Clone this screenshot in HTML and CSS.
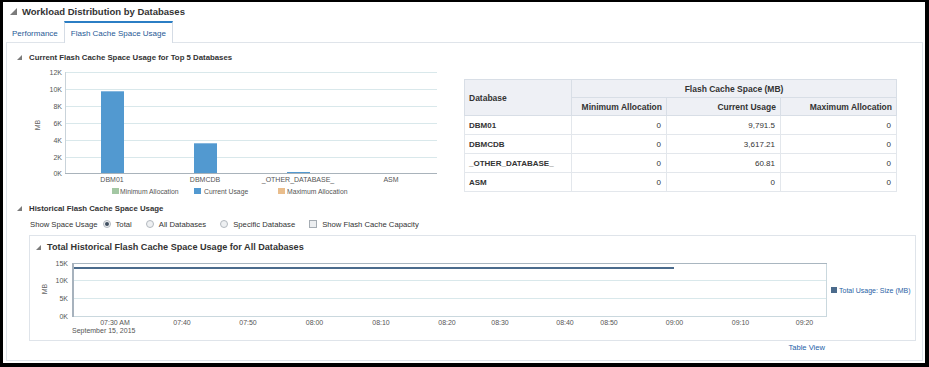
FILE: index.html
```html
<!DOCTYPE html>
<html>
<head>
    <title>Workload Distribution by Databases</title>
    <link rel="stylesheet" href="styles.css">
</head>
<body>
    <div class="page">
        <div class="title-row">
            <svg class="disc disc-big" viewBox="0 0 7 7"><polygon points="7,0 7,7 0,7"/></svg>
            <h1>Workload Distribution by Databases</h1>
        </div>

        <div class="tabs">
            <div class="tab">Performance</div>
            <div class="tab active">Flash Cache Space Usage</div>
        </div>

        <div class="panel">
            <div class="sec-head">
                <svg class="disc" viewBox="0 0 6 6"><polygon points="6,0 6,6 0,6"/></svg>
                Current Flash Cache Space Usage for Top 5 Databases
            </div>

            <div class="top-row">
                <svg class="chart bar-chart" width="440" height="135">
                    <g class="grid">
                        <line x1="58" y1="9.5" x2="430" y2="9.5"/>
                        <line x1="58" y1="26.5" x2="430" y2="26.5"/>
                        <line x1="58" y1="43.5" x2="430" y2="43.5"/>
                        <line x1="58" y1="60.5" x2="430" y2="60.5"/>
                        <line x1="58" y1="77.5" x2="430" y2="77.5"/>
                        <line x1="58" y1="94.5" x2="430" y2="94.5"/>
                    </g>
                    <line class="axis-y" x1="58.5" y1="9" x2="58.5" y2="110"/>
                    <line class="axis-x" x1="58" y1="110.5" x2="430" y2="110.5"/>

                    <g class="ylab">
                        <text x="55" y="12">12K</text>
                        <text x="55" y="29">10K</text>
                        <text x="55" y="46">8K</text>
                        <text x="55" y="63">6K</text>
                        <text x="55" y="80">4K</text>
                        <text x="55" y="97">2K</text>
                        <text x="55" y="113">0K</text>
                    </g>
                    <text class="unit" x="30" y="64.5" transform="rotate(-90 30 62)">MB</text>

                    <rect class="bar" x="94" y="28" width="23" height="82"/>
                    <rect class="bar-top" x="94" y="28" width="23" height="1"/>
                    <rect class="bar" x="187" y="80" width="23" height="30"/>
                    <rect class="bar-top" x="187" y="80" width="23" height="1"/>
                    <rect class="bar" x="280" y="109" width="23" height="1"/>

                    <g class="xlab">
                        <text x="105" y="119">DBM01</text>
                        <text x="198" y="119">DBMCDB</text>
                        <text x="291" y="119">_OTHER_DATABASE_</text>
                        <text x="384" y="119">ASM</text>
                    </g>

                    <rect x="105" y="125" width="7" height="6" fill="#a3c7a3"/>
                    <text class="leg" x="113" y="131">Minimum Allocation</text>
                    <rect x="187" y="125" width="7" height="6" fill="#5299d0"/>
                    <text class="leg" x="197" y="131">Current Usage</text>
                    <rect x="271" y="125" width="7" height="6" fill="#e9bd8c"/>
                    <text class="leg" x="280" y="131">Maximum Allocation</text>
                </svg>

                <table class="usage">
                    <colgroup>
                        <col style="width: 107px">
                        <col style="width: 95px">
                        <col style="width: 114px">
                        <col style="width: 116px">
                    </colgroup>
                    <tr class="hrow">
                        <th rowspan="2" class="name-head">Database</th>
                        <th colspan="3" class="group-head">Flash Cache Space (MB)</th>
                    </tr>
                    <tr class="hrow">
                        <th>Minimum Allocation</th>
                        <th>Current Usage</th>
                        <th>Maximum Allocation</th>
                    </tr>
                    <tr>
                        <td class="name">DBM01</td>
                        <td>0</td>
                        <td>9,791.5</td>
                        <td>0</td>
                    </tr>
                    <tr>
                        <td class="name">DBMCDB</td>
                        <td>0</td>
                        <td>3,617.21</td>
                        <td>0</td>
                    </tr>
                    <tr>
                        <td class="name">_OTHER_DATABASE_</td>
                        <td>0</td>
                        <td>60.81</td>
                        <td>0</td>
                    </tr>
                    <tr>
                        <td class="name">ASM</td>
                        <td>0</td>
                        <td>0</td>
                        <td>0</td>
                    </tr>
                </table>
            </div>

            <div class="sec-head sec-2">
                <svg class="disc" viewBox="0 0 6 6"><polygon points="6,0 6,6 0,6"/></svg>
                Historical Flash Cache Space Usage
            </div>

            <div class="controls">
                <span>Show Space Usage</span>
                <span class="opt first"><span class="radio on"></span>Total</span>
                <span class="opt"><span class="radio"></span>All Databases</span>
                <span class="opt"><span class="radio"></span>Specific Database</span>
                <span class="opt"><span class="check"></span>Show Flash Cache Capacity</span>
            </div>

            <div class="inner">
                <div class="inner-head">
                    <svg class="disc" viewBox="0 0 6 6"><polygon points="6,0 6,6 0,6"/></svg>
                    Total Historical Flash Cache Space Usage for All Databases
                </div>
                <svg class="chart line-chart" width="885" height="86">
                    <rect class="plot" x="42.5" y="9.5" width="754" height="53"/>
                    <line class="plot-top" x1="42" y1="9.5" x2="797" y2="9.5"/>
                    <g class="grid">
                        <line x1="44" y1="26.5" x2="796" y2="26.5"/>
                        <line x1="44" y1="44.5" x2="796" y2="44.5"/>
                    </g>
                    <line class="axis-left" x1="43" y1="9" x2="43" y2="63"/>
                    <line class="usage-line" x1="44" y1="14" x2="644" y2="14"/>

                    <g class="ylab">
                        <text x="38" y="12">15K</text>
                        <text x="38" y="29">10K</text>
                        <text x="38" y="47">5K</text>
                        <text x="38" y="65">0K</text>
                    </g>
                    <text class="unit" x="14" y="37.5" transform="rotate(-90 14 35)">MB</text>

                    <g class="xlab">
                        <text x="85" y="71">07:30 AM</text>
                        <text x="152" y="71">07:40</text>
                        <text x="218" y="71">07:50</text>
                        <text x="284.5" y="71">08:00</text>
                        <text x="351" y="71">08:10</text>
                        <text x="417" y="71">08:20</text>
                        <text x="470" y="71">08:30</text>
                        <text x="535" y="71">08:40</text>
                        <text x="579" y="71">08:50</text>
                        <text x="644.5" y="71">09:00</text>
                        <text x="710.5" y="71">09:10</text>
                        <text x="774.5" y="71">09:20</text>
                    </g>
                    <text class="date" x="42" y="79">September 15, 2015</text>

                    <rect x="801" y="33" width="6" height="6" fill="#4b6b8c"/>
                    <text class="leg-link" x="809" y="38.5">Total Usage: Size (MB)</text>
                </svg>
            </div>

            <div class="links"><a href="#">Table View</a></div>
        </div>
    </div>
</body>
</html>
```

FILE: styles.css
```css
body {
    margin: 0;
    background-color: #000;
    font-family: "Liberation Sans", Arial, sans-serif;
    color: #333;
}

.page {
    background-color: #fff;
    margin: 2px 4px 0 3px;
    height: 361px;
    display: flex;
    flex-direction: column;
}

.disc {
    width: 5px;
    height: 5px;
    fill: #7b7b7b;
    flex: none;
}

.disc-big {
    width: 7px;
    height: 7px;
}

.title-row {
    height: 19px;
    display: flex;
    align-items: center;
    gap: 5px;
    padding-left: 7px;
}

h1 {
    margin: 0;
    font-size: 9.5px;
    font-weight: bold;
    color: #333;
}

/* tabs */
.tabs {
    display: flex;
    height: 21px;
    margin-left: 3px;
    position: relative;
    z-index: 1;
}

.tab {
    box-sizing: border-box;
    height: 21px;
    padding: 3px 6px 0;
    display: flex;
    align-items: center;
    font-size: 8px;
    color: #1f5a96;
}

.tab.active {
    height: 22px;
    padding-top: 1px;
    background-color: #fff;
    border: 1px solid #d5dce5;
    border-top: 2px solid #2b7ec4;
    border-bottom: none;
}

.panel {
    flex: 1;
    border: 1px solid #dfe4ea;
    margin: 0 2px 2px 3px;
}

.sec-head {
    height: 12px;
    margin-top: 8px;
    padding-left: 10px;
    display: flex;
    align-items: center;
    gap: 7px;
    font-size: 7.8px;
    font-weight: bold;
    color: #333;
}

.sec-2 {
    margin-top: 4px;
}

.top-row {
    display: flex;
    align-items: flex-start;
}

/* charts */
.chart {
    display: block;
    flex: none;
}

.chart text {
    font-family: "Liberation Sans", Arial, sans-serif;
    font-size: 7px;
    fill: #555;
}

.grid line {
    stroke: #d9e8eb;
    stroke-width: 1;
}

.axis-y {
    stroke: #c9d3da;
}

.axis-x {
    stroke: #a9b3bb;
}

.ylab text {
    text-anchor: end;
}

.xlab text {
    text-anchor: middle;
}

.chart .unit {
    text-anchor: middle;
    fill: #666;
}

.bar {
    fill: #5299d0;
}

.bar-top {
    fill: #86b7de;
}

.chart .leg {
    font-size: 6.8px;
}

.plot {
    fill: none;
    stroke: #cad8de;
}

.plot-top {
    stroke: #a9b6c0;
}

.axis-left {
    stroke: #a7b2bd;
    stroke-width: 2;
}

.usage-line {
    stroke: #4b6b8c;
    stroke-width: 2;
}

.chart .leg-link {
    fill: #2a5fa5;
}

/* table */
.usage {
    margin: 16px 0 0 17px;
    width: 432px;
    table-layout: fixed;
    border-collapse: collapse;
    border: 1px solid #d8dee6;
    font-size: 8px;
}

.usage th {
    height: 17px;
    padding: 0 4px;
    background-color: #eef0f5;
    border: 1px solid #d8dee6;
    font-size: 8.5px;
    font-weight: bold;
    color: #333;
    text-align: right;
    white-space: nowrap;
}

.usage th.name-head {
    text-align: left;
}

.usage th.group-head {
    text-align: center;
}

.usage td {
    height: 18px;
    padding: 0 5px;
    border: 1px solid #e3e7ec;
    text-align: right;
    color: #333;
    white-space: nowrap;
}

.usage td.name {
    text-align: left;
    font-weight: bold;
    padding-left: 4px;
}

/* controls */
.controls {
    height: 12px;
    margin-top: 4px;
    padding-left: 23px;
    display: flex;
    align-items: center;
    font-size: 7.7px;
    color: #333;
}

.opt {
    display: flex;
    align-items: center;
    gap: 5px;
    margin-left: 14px;
}

.opt.first {
    margin-left: 5px;
}

.radio {
    box-sizing: border-box;
    width: 8px;
    height: 8px;
    border-radius: 50%;
    border: 1px solid #b3b9bf;
    background-color: #eef0f2;
    display: flex;
    align-items: center;
    justify-content: center;
}

.radio.on::after {
    content: "";
    width: 4px;
    height: 4px;
    border-radius: 50%;
    background-color: #3f4f60;
}

.check {
    box-sizing: border-box;
    width: 8px;
    height: 8px;
    border: 1px solid #a5acb3;
    background-color: #eceef0;
}

/* historical */
.inner {
    margin: 5px 6px 0 22px;
    border: 1px solid #dfe4ea;
}

.inner-head {
    height: 14px;
    margin-top: 4px;
    padding-left: 6px;
    display: flex;
    align-items: center;
    gap: 6px;
    font-size: 9.1px;
    font-weight: bold;
    color: #333;
}

.links {
    margin-top: 1px;
    padding-right: 97px;
    text-align: right;
    line-height: 11px;
    font-size: 7.6px;
}

.links a {
    color: #2560a8;
    text-decoration: none;
}
```
